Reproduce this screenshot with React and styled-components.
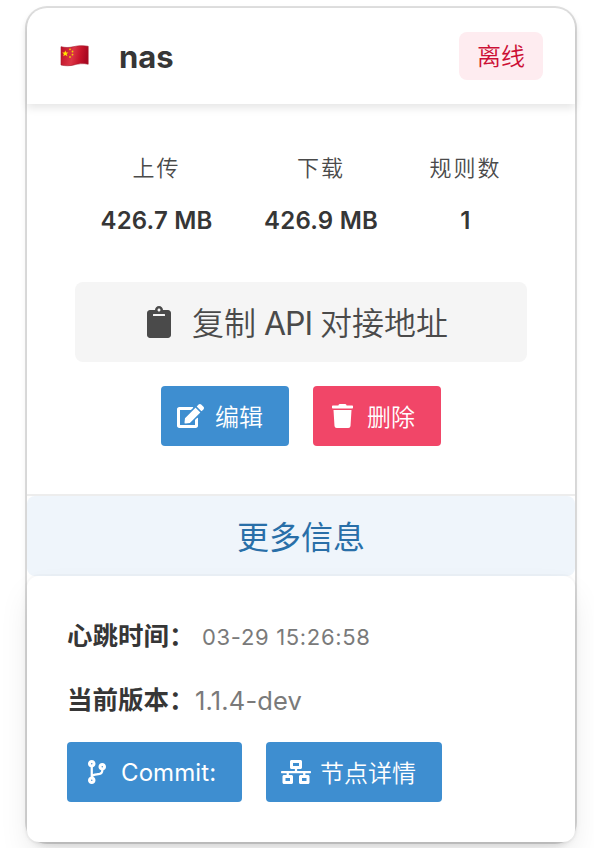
import React from "react";
import styled, { createGlobalStyle } from "styled-components";
import { FaClipboard, FaEdit, FaTrash, FaCodeBranch, FaNetworkWired } from "react-icons/fa";

const GlobalStyle = createGlobalStyle`
  * { box-sizing: border-box; }
  html { overflow: hidden; background: #fff; }
  body {
    margin: 0;
    color: #4a4a4a;
    font-family: Inter, "Noto Sans CJK SC", sans-serif;
    font-size: 24px;
    -webkit-font-smoothing: antialiased;
  }
`;

const Page = styled.main`
  height: 848px;
  padding: 8px 19px 0 27px;
  overflow: hidden;
`;

const Card = styled.article`
  width: 548px;
  height: 834px;
  display: flex;
  flex-direction: column;
  border-radius: 20px;
  background: #fff;
  box-shadow: 0 4px 6px rgba(10, 10, 10, 0.1), 0 0 0 2px rgba(10, 10, 10, 0.12);
`;

const CardHeader = styled.header`
  height: 96px;
  flex: none;
  display: flex;
  align-items: center;
  padding: 0 32px 0 33px;
  border-radius: 20px 20px 0 0;
  box-shadow: 0 4px 8px rgba(10, 10, 10, 0.1);
`;

const Flag = styled.svg`
  width: 29px;
  height: 22px;
`;

const NodeName = styled.h1`
  flex: 1;
  margin: 1px 0 0 30px;
  color: #363636;
  font-size: 31px;
  font-weight: 700;
  line-height: 40px;
`;

const StatusTag = styled.span`
  width: 84px;
  height: 48px;
  border-radius: 8px;
  background: #feecf0;
  color: #cc0f35;
  font-weight: 350;
  line-height: 49px;
  text-align: center;
`;

const CardBody = styled.section`
  height: 390px;
  flex: none;
  display: flex;
  flex-direction: column;
  align-items: center;
  padding-top: 48px;
`;

const Stats = styled.dl`
  display: flex;
  gap: 51.5px;
  margin: 0;
`;

const Stat = styled.div`
  text-align: center;
`;

const StatLabel = styled.dt`
  font-size: 22px;
  font-weight: 350;
  line-height: 33px;
  letter-spacing: 2px;
`;

const StatValue = styled.dd`
  margin: 18px 0 0;
  color: #363636;
  font-weight: 600;
  line-height: 36px;
  letter-spacing: 0.2px;
`;

const CopyButton = styled.button`
  width: 452px;
  height: 80px;
  display: flex;
  align-items: center;
  justify-content: center;
  gap: 21px;
  margin-top: 43px;
  padding: 0 7px 0 0;
  border: 0;
  border-radius: 8px;
  background: #f5f5f5;
  color: #4a4a4a;
  font: inherit;
  font-size: 32px;
`;

const Actions = styled.div`
  display: flex;
  gap: 24px;
  margin-top: 24px;
`;

const tones = { info: "#3e8ed0", danger: "#f14668" };

const ActionButton = styled.button`
  width: ${({ $width }) => $width}px;
  height: 60px;
  display: flex;
  align-items: center;
  padding: 0;
  border: 0;
  border-radius: 4px;
  background: ${({ $tone }) => tones[$tone]};
  color: #fff;
  font: inherit;
  white-space: nowrap;
`;

const IconSlot = styled.span`
  width: 36px;
  display: flex;
  justify-content: center;
  margin: 0 7px 0 11px;

  svg {
    flex: none;
    width: ${({ $glyph = 24 }) => $glyph}px;
    height: 24px;
  }
`;

const CopyIcon = styled(FaClipboard)`
  width: 24px;
  height: 32px;
`;

const Caption = styled.span`
  margin-top: -${({ $lift = 2 }) => $lift}px;
  font-weight: ${({ $weight = 350 }) => $weight};
  letter-spacing: ${({ $spacing = 0 }) => $spacing}px;
`;

const Latin = styled.span`
  font-weight: 380;
  letter-spacing: -1px;
`;

const MoreBar = styled.footer`
  height: 82px;
  flex: none;
  border-top: 2px solid #ededed;
`;

const MoreButton = styled.button`
  width: 100%;
  height: 80px;
  display: block;
  padding: 0 0 2px;
  border: 0;
  border-radius: 8px;
  background: #eff5fb;
  color: #296fa8;
  font: inherit;
  font-size: 32px;
`;

const Details = styled.section`
  flex: 1;
  padding: 40px;
  border-radius: 12px;
  background: #fff;
  box-shadow: 0 16px 32px -4px rgba(10, 10, 10, 0.1), 0 0 0 2px rgba(10, 10, 10, 0.02);
`;

const DetailRow = styled.p`
  height: 40px;
  display: flex;
  align-items: center;
  margin: 0 0 24px;
`;

const DetailLabel = styled.strong`
  width: ${({ $width }) => $width}px;
  margin-top: -5px;
  color: #363636;
  font-size: 25.5px;
  font-weight: 600;
  white-space: nowrap;
`;

const DetailValue = styled.span`
  margin-top: ${({ $shift = 0 }) => $shift}px;
  color: #7a7a7a;
  font-size: ${({ $size }) => $size}px;
  letter-spacing: ${({ $spacing = 0 }) => $spacing}px;
`;

const DetailActions = styled.div`
  display: flex;
  gap: 24px;
  margin-top: -2px;

  ${IconSlot} {
    margin: 0 6px 0 12px;
  }
`;

function ChinaFlag() {
  return (
    <Flag viewBox="0 0 29 22" role="img" aria-label="CN">
      <defs>
        <linearGradient id="cloth" x1="0" x2="1" y1="0" y2="0.15">
          <stop offset="0" stopColor="#bd1027" />
          <stop offset="0.48" stopColor="#dc3545" />
          <stop offset="0.75" stopColor="#c7152b" />
          <stop offset="1" stopColor="#a90822" />
        </linearGradient>
      </defs>
      <path
        d="M1 1.7C5 2.7 9 2.8 13 1.8S23 .2 28.2 1.3V19.2C23 18 18 18.8 14 19.9S5 21 1 20Z"
        fill="url(#cloth)"
        stroke="#a51a2a"
        strokeWidth=".6"
      />
      <path
        d="m5.3 5.4.9 2 2.3.1-1.8 1.5.7 2.3-2.1-1.3-2 1.3.6-2.3L2.2 7.5l2.3-.1Z"
        fill="#ffe600"
      />
      <g fill="#f0d000">
        <circle cx="10" cy="4.3" r=".9" />
        <circle cx="12.5" cy="6.5" r=".9" />
        <circle cx="12.5" cy="9.6" r=".9" />
        <circle cx="10" cy="12" r=".9" />
      </g>
    </Flag>
  );
}

const stats = [
  ["上传", "426.7 MB"],
  ["下载", "426.9 MB"],
  ["规则数", "1"],
];

export default function App() {
  return (
    <>
      <GlobalStyle />
      <Page>
        <Card>
          <CardHeader>
            <ChinaFlag />
            <NodeName>nas</NodeName>
            <StatusTag>离线</StatusTag>
          </CardHeader>
          <CardBody>
            <Stats>
              {stats.map(([label, value]) => (
                <Stat key={label}>
                  <StatLabel>{label}</StatLabel>
                  <StatValue>{value}</StatValue>
                </Stat>
              ))}
            </Stats>
            <CopyButton>
              <CopyIcon />
              <Caption $lift={3}>复制<Latin> API </Latin>对接地址</Caption>
            </CopyButton>
            <Actions>
              <ActionButton $tone="info" $width={128}>
                <IconSlot $glyph={27}><FaEdit /></IconSlot>
                <Caption>编辑</Caption>
              </ActionButton>
              <ActionButton $tone="danger" $width={128}>
                <IconSlot $glyph={21}><FaTrash /></IconSlot>
                <Caption>删除</Caption>
              </ActionButton>
            </Actions>
          </CardBody>
          <MoreBar>
            <MoreButton>更多信息</MoreButton>
          </MoreBar>
          <Details>
            <DetailRow>
              <DetailLabel $width={135}>心跳时间：</DetailLabel>
              <DetailValue $size={22} $spacing={0.68} $shift={2}>03-29 15:26:58</DetailValue>
            </DetailRow>
            <DetailRow>
              <DetailLabel $width={128}>当前版本：</DetailLabel>
              <DetailValue $size={25.5} $spacing={0.15}>1.1.4-dev</DetailValue>
            </DetailRow>
            <DetailActions>
              <ActionButton $tone="info" $width={175}>
                <IconSlot $glyph={18}><FaCodeBranch /></IconSlot>
                <Caption $spacing={0.1} $lift={0} $weight={380}>Commit:</Caption>
              </ActionButton>
              <ActionButton $tone="info" $width={176}>
                <IconSlot $glyph={30}><FaNetworkWired /></IconSlot>
                <Caption>节点详情</Caption>
              </ActionButton>
            </DetailActions>
          </Details>
        </Card>
      </Page>
    </>
  );
}
